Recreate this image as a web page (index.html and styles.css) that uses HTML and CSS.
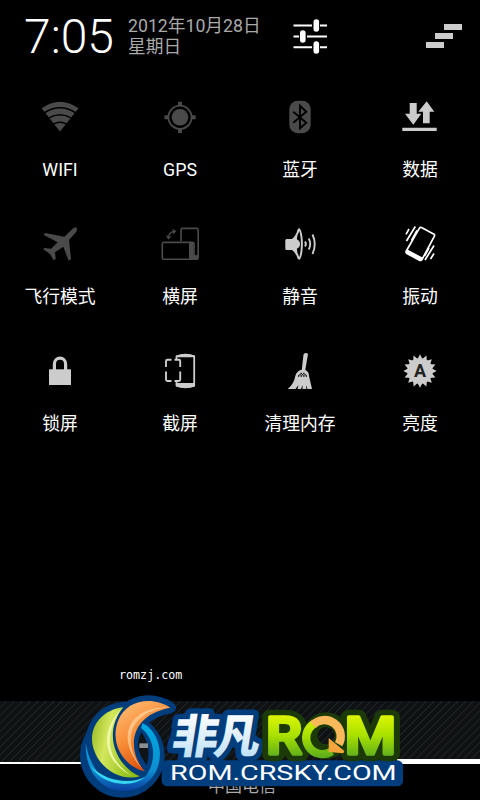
FILE: index.html
```
<!DOCTYPE html>
<html lang="zh-CN">
<head>
    <meta charset="utf-8">
    <title>快捷开关</title>
    <link rel="stylesheet" href="styles.css">
</head>
<body>
<div class="screen">
    <div class="header">
        <div class="clock">7:05</div>
        <div class="date">
            <div>2012年10月28日</div>
            <div>星期日</div>
        </div>
        <svg class="settings" width="36" height="36" viewBox="0 0 36 36">
            <path d="M1.500 7.500H20M28 7.500H35M1.500 18.500H7M15 18.500H35M1.500 29.300H20M28 29.300H35" stroke="#fff" stroke-width="2"/>
            <path d="M24.300 4V11M10.800 15V22M24.300 26V33" stroke="#fff" stroke-width="5.600" stroke-linecap="round"/>
        </svg>
        <svg class="clear" width="36" height="24" viewBox="0 0 36 24">
            <path d="M18 0H36V6H18zM9 9H27V15H9zM0 18H18V24H0z" fill="#ccc"/>
        </svg>
    </div>

    <div class="toggles">
        <div class="toggle">
            <svg class="icon off" viewBox="0 0 48 48">
                <path d="M24 38.500L5.600 15.300Q24 2.200 42.600 15.300z" fill="currentColor"/>
                <path d="M8 20Q24 9.500 40 20M12 25.300Q24 18.300 36 25.300M17 31.300Q24 27.300 31 31.300" fill="none" stroke="#000" stroke-width="1.500"/>
            </svg>
            <div class="label">WIFI</div>
        </div>
        <div class="toggle">
            <svg class="icon off" viewBox="0 0 48 48">
                <circle cx="24" cy="24.300" r="8.300" fill="currentColor"/>
                <circle cx="24" cy="24.300" r="11.600" fill="none" stroke="currentColor" stroke-width="1.800"/>
                <path d="M24 8.800V13M24 35.600V40M8.500 24.300H12.500M35.500 24.300H39.600" stroke="currentColor" stroke-width="4"/>
            </svg>
            <div class="label">GPS</div>
        </div>
        <div class="toggle">
            <svg class="icon off" viewBox="0 0 48 48">
                <rect x="13.300" y="7.700" width="21.400" height="32.600" rx="8.500" fill="currentColor"/>
                <path d="M17.300 18.700L30.300 29.700L24 35.300V12.700L30.300 18.700L17.300 29.700" fill="none" stroke="#000" stroke-width="1.900"/>
            </svg>
            <div class="label">蓝牙</div>
        </div>
        <div class="toggle">
            <svg class="icon on" viewBox="0 0 48 48">
                <path d="M13.700 10H20.700V20.700H25.300L17.300 31.700L9 20.700H13.700zM30.700 8.300L38.300 18.700H33.700V30.300H27V18.700H22.300zM6.300 34.700H40.700V38H6.300z" fill="currentColor"/>
            </svg>
            <div class="label">数据</div>
        </div>

        <div class="toggle">
            <svg class="icon off" viewBox="0 0 48 48">
                <path d="M37.500 8L40 7.200L41 8.500L40.500 11.500L33 20L35 39L32.700 40.700L27.300 26.700L19 32.300L19.700 39L17.700 40.300L14 34L7.300 29.300L8.300 28L15 28.700L21.700 22.300L7.700 15L9 13L28.300 16.700z" fill="currentColor"/>
            </svg>
            <div class="label">飞行模式</div>
        </div>
        <div class="toggle">
            <svg class="icon off" viewBox="0 0 48 48">
                <g fill="none" stroke="currentColor" stroke-width="1.600">
                    <path d="M25 21V10Q25 8.400 26.600 8.400H40.600Q42.200 8.400 42.200 10V37.500Q42.200 39.200 40.600 39.200H8Q6.300 39.200 6.300 37.500V24Q6.300 22.400 8 22.400H36Q38 22.400 38 24V36H42"/>
                    <path d="M12.300 18Q12.800 12 18.800 11.200M10.700 15.500L12.300 18.500L15 16.500M16.500 9.500L19.300 11.200L17.300 13.700" stroke-width="1.300"/>
                </g>
                <path d="M33 22H37.500V35.500H42V39.500H33z" fill="currentColor"/>
            </svg>
            <div class="label">横屏</div>
        </div>
        <div class="toggle">
            <svg class="icon on" viewBox="0 0 48 48">
                <path d="M10.500 19H16Q20 16 21.500 9.500Q22.300 8.300 23.500 8.300C28 12 28 36 23.500 39.800Q22.300 39.800 21.500 38.500Q20 32.500 16 30H10.500Q9.300 30 9.300 28.500V20.500Q9.300 19 10.500 19z" fill="currentColor"/>
                <path d="M23.500 11Q20.500 16 21 19.500Q23.500 21 23.500 24T21 28.500Q20.500 32 23.500 37Q26.300 24 23.500 11z" fill="#000"/>
                <path d="M21 19.500Q24 21 24 24T21 28.500z" fill="currentColor"/>
                <path d="M29 21.500Q30.800 24 29 26.500M32.700 18.500Q35.700 24 32.700 29.500M36.500 14.500Q41 24 36.500 34" fill="none" stroke="currentColor" stroke-width="1.900"/>
            </svg>
            <div class="label">静音</div>
        </div>
        <div class="toggle">
            <svg class="icon bright" viewBox="0 0 48 48">
                <path d="M25.500 7.500L38 14.300Q39 15 38.300 16.300L26 39.500Q25 41 23.500 40.200L11 33.500Q9.500 32.500 10.300 31L23.300 8.300Q24.200 6.800 25.500 7.500z" fill="none" stroke="currentColor" stroke-width="1.700"/>
                <path d="M11.500 29.500L27 37.800L25 41.300L9.500 32.500z" fill="currentColor"/>
                <path d="M10 14.300L13 9M10.500 21L19.300 6.500M15.500 20.500L21 10.500M29 40L38 25.500M34.500 39L38 33.500M28.500 36L33 28" stroke="currentColor" stroke-width="1.700"/>
            </svg>
            <div class="label">振动</div>
        </div>

        <div class="toggle">
            <svg class="icon on" viewBox="0 0 48 48">
                <rect x="13" y="22.300" width="22" height="15.700" fill="currentColor"/>
                <path d="M18.400 23V17A5.600 5.800 0 0 1 29.600 17V23" fill="none" stroke="currentColor" stroke-width="3.200"/>
            </svg>
            <div class="label">锁屏</div>
        </div>
        <div class="toggle">
            <svg class="icon on" viewBox="0 0 48 48">
                <path d="M20.500 13V9.500Q29.500 6 38.200 9.500V38.500Q29.500 42 20.500 38.500V35" fill="none" stroke="currentColor" stroke-width="1.800"/>
                <path d="M20 8.500Q29.500 5.500 39 8.500V10.300H20zM20 36H39V39.500Q29.500 42.500 20 39.500z" fill="currentColor"/>
                <path d="M15.500 12.800H11.500Q10 12.800 10 14.300V20M10 24.500V32.500Q10 34 11.500 34H15.500M18.500 12.800H23Q24.200 12.800 24.200 14.300V20M24.200 24.500V32.500Q24.200 34 23 34H18.500" fill="none" stroke="currentColor" stroke-width="1.900"/>
            </svg>
            <div class="label">截屏</div>
        </div>
        <div class="toggle">
            <svg class="icon on" viewBox="0 0 48 48">
                <path d="M27.500 7.500Q29.500 5 32 7L29.300 23Q33 24.500 33 29L36 42H31.500L30 38L30.300 42H26.500V38L25 42H21.500L22.500 38L19.500 42H11.700Q18 37 19.300 29Q20.500 24 25.800 22.800z" fill="currentColor"/>
                <path d="M22 29H31M23.300 27.700H30M24.600 26.400H29" stroke="#000" stroke-width="1.300" stroke-dasharray="1.300 1.300"/>
            </svg>
            <div class="label">清理内存</div>
        </div>
        <div class="toggle">
            <svg class="icon on" viewBox="0 0 48 48">
                <path id="spikes" d="M24 7.300L27 13H21zM40.700 24L35 27V21zM24 40.700L21 35H27zM7.300 24L13 21V27z" fill="currentColor"/>
                <use href="#spikes" transform="rotate(22.500 24 24)"/>
                <use href="#spikes" transform="rotate(45 24 24)"/>
                <use href="#spikes" transform="rotate(67.500 24 24)"/>
                <circle cx="24" cy="24" r="12.700" fill="currentColor"/>
                <text x="24" y="30.300" class="auto">A</text>
            </svg>
            <div class="label">亮度</div>
        </div>
    </div>

    <div class="site">romzj.com</div>

    <div class="footer">
        <div class="stripes"></div>
        <div class="carrier">中国电信</div>
        <svg class="logo" width="340" height="110" viewBox="0 90 1020 330">
            <defs>
                <linearGradient id="green" x1="0" y1="0" x2="1" y2="0.300">
                    <stop offset="0" stop-color="#8fb51c"/>
                    <stop offset="0.400" stop-color="#d3e75c"/>
                    <stop offset="1" stop-color="#8ebd16"/>
                </linearGradient>
                <linearGradient id="orange" x1="0" y1="0" x2="0.500" y2="1">
                    <stop offset="0" stop-color="#ffc27c"/>
                    <stop offset="0.550" stop-color="#f88b35"/>
                    <stop offset="1" stop-color="#d94b09"/>
                </linearGradient>
                <linearGradient id="ring" x1="0" y1="0" x2="0" y2="1">
                    <stop offset="0" stop-color="#00a9e0"/>
                    <stop offset="0.700" stop-color="#0e8ed0"/>
                    <stop offset="1" stop-color="#0b3fa0"/>
                </linearGradient>
                <linearGradient id="ice" x1="0" y1="0" x2="0" y2="1">
                    <stop offset="0.200" stop-color="#fff"/>
                    <stop offset="1" stop-color="#b5dcf5"/>
                </linearGradient>
                <linearGradient id="lime" gradientUnits="userSpaceOnUse" x1="0" y1="165" x2="0" y2="290">
                    <stop offset="0" stop-color="#dcf500"/>
                    <stop offset="0.500" stop-color="#a8e000"/>
                    <stop offset="1" stop-color="#5fae1c"/>
                </linearGradient>
            </defs>

            <!-- outline -->
            <g fill="#003d7c" stroke="#003d7c" stroke-width="34" stroke-linejoin="round">
                <circle cx="157" cy="286" r="110"/>
                <path d="M160 142C90 150 50 210 72 270C90 325 150 365 210 349C150 325 90 230 160 142z"/>
                <path d="M301 143C250 110 170 115 143 185C120 250 160 320 225 334C180 290 160 170 301 143z"/>
                <rect x="292" y="318" width="690" height="44"/>
            </g>
            <path d="M214 216Q246 260 230 315Q188 262 214 216z" fill="#101417"/>
            <path d="M208 250H234V264H208z" fill="#8b8f92"/>

            <!-- ring and the two crescents -->
            <path d="M47 250C47 345 100 393 160 393C235 393 276 330 269 270C264 232 245 203 218 190L213 204C250 232 263 290 232 342C215 366 175 372 145 370C95 365 60 320 47 250z" fill="url(#ring)"/>
            <path d="M62 318C92 372 180 390 226 350C185 372 110 368 62 318z" fill="#36d5f2"/>
            <path d="M160 142C90 150 50 210 72 270C90 325 150 365 210 349C150 325 90 230 160 142z" fill="url(#green)"/>
            <path d="M152 146C92 215 92 300 190 351C112 300 98 235 152 146z" fill="#eef7a8"/>
            <path d="M301 143C250 110 170 115 143 185C120 250 160 320 225 334C180 290 160 170 301 143z" fill="url(#orange)"/>
            <path d="M296 142C170 140 135 240 218 328C150 240 180 155 296 142z" fill="#ffd3a0" fill-opacity="0.700"/>

            <g transform="translate(42 -5) skewX(-9)">
                <text x="304" y="284" class="name edge" textLength="264">非凡</text>
                <text x="304" y="284" class="name" textLength="264">非凡</text>
            </g>

            <g class="rom edge">
                <text x="588" y="282" textLength="108" lengthAdjust="spacingAndGlyphs">R</text>
                <text x="824" y="282" textLength="154" lengthAdjust="spacingAndGlyphs">M</text>
                <circle cx="768" cy="227" r="48" fill="none"/>
            </g>
            <g class="rom">
                <text x="588" y="282" textLength="108" lengthAdjust="spacingAndGlyphs">R</text>
                <text x="824" y="282" textLength="154" lengthAdjust="spacingAndGlyphs">M</text>
            </g>
            <path d="M733 191A49 49 0 1 0 785 274" fill="none" stroke="url(#lime)" stroke-width="25"/>
            <path d="M729 194A49 49 0 0 1 806 253" fill="none" stroke="#f8b95a" stroke-width="25"/>
            <path d="M776 234L823 273L820 280L776 276z" fill="#f3a53b"/>

            <rect x="290" y="312" width="690" height="54" fill="#003d7c"/>
            <text x="300" y="360" class="url" textLength="680" lengthAdjust="spacingAndGlyphs">ROM.CRSKY.COM</text>
        </svg>
    </div>
</div>
</body>
</html>
```
FILE: styles.css
```
body {
    margin: 0;
    background-color: #000;
    color: #fff;
    font-family: Roboto, "Noto Sans CJK SC", sans-serif;
}
.screen {
    display: flex;
    flex-direction: column;
    width: 480px;
    height: 800px;
    overflow: hidden;
    background-color: #000;
}
.header {
    display: flex;
    align-items: flex-start;
    box-sizing: border-box;
    height: 72px;
    padding: 0 18px 0 24px;
}
.clock {
    width: 104px;
    padding-top: 9px;
    font-size: 48px;
    font-weight: 300;
    line-height: 56px;
    white-space: nowrap;
}
.date {
    width: 164px;
    padding-top: 16px;
    color: #aaa;
    font-size: 17.7px;
    line-height: 21px;
    white-space: nowrap;
}
.settings {
    margin-top: 18px;
}
.clear {
    margin-top: 24px;
    margin-left: auto;
}
.toggles {
    display: grid;
    grid-template-columns: repeat(4, 120px);
    grid-auto-rows: 127px;
    padding-top: 21px;
    height: 381px;
}
.toggle {
    display: flex;
    flex-direction: column;
    align-items: center;
}
.icon {
    width: 48px;
    height: 48px;
}
.off {
    color: #4a4a4a;
}
.on {
    color: #ccc;
}
.bright {
    color: #fff;
}
.auto {
    fill: #222;
    font-size: 18px;
    font-weight: bold;
    text-anchor: middle;
}
.label {
    margin-top: 16px;
    font-size: 17.8px;
    line-height: 26px;
    white-space: nowrap;
}
.site {
    margin-top: 193px;
    padding-left: 119px;
    font-family: "DejaVu Sans Mono", monospace;
    font-size: 11.7px;
    line-height: 16px;
}
.footer {
    position: relative;
    margin-top: 18px;
    height: 99px;
}
.stripes {
    height: 61px;
    border-bottom: 2px solid #fff;
    background: repeating-linear-gradient(135deg, #101112 0, #101112 4px, #1d2a30 4.6px, #101112 5.6px);
}
.stripes::after {
    content: "";
    display: block;
    width: 83px;
    height: 5px;
    margin-left: auto;
    transform: translateY(58px);
    background-color: #fff;
}
.carrier {
    padding: 10px 0 0 208px;
    color: #aaa;
    font-size: 17px;
    line-height: 24px;
}
/* watermark lies over the status strip */
.logo {
    position: absolute;
    left: 70px;
    top: -11px;
}
.name {
    fill: url(#ice);
    font-family: "Noto Sans CJK SC", sans-serif;
    font-size: 138px;
    font-weight: 900;
}
.rom {
    fill: url(#lime);
    stroke: url(#lime);
    stroke-width: 11;
    stroke-linejoin: round;
    font-size: 158px;
    font-weight: 500;
}
.edge {
    stroke-linejoin: round;
}
.name.edge {
    fill: #003d7c;
    stroke: #003d7c;
    stroke-width: 34;
}
.rom.edge {
    fill: #1c3a08;
    stroke: #1c3a08;
    stroke-width: 44;
}
.url {
    fill: #fff;
    font-size: 58px;
    font-weight: 400;
}
```
